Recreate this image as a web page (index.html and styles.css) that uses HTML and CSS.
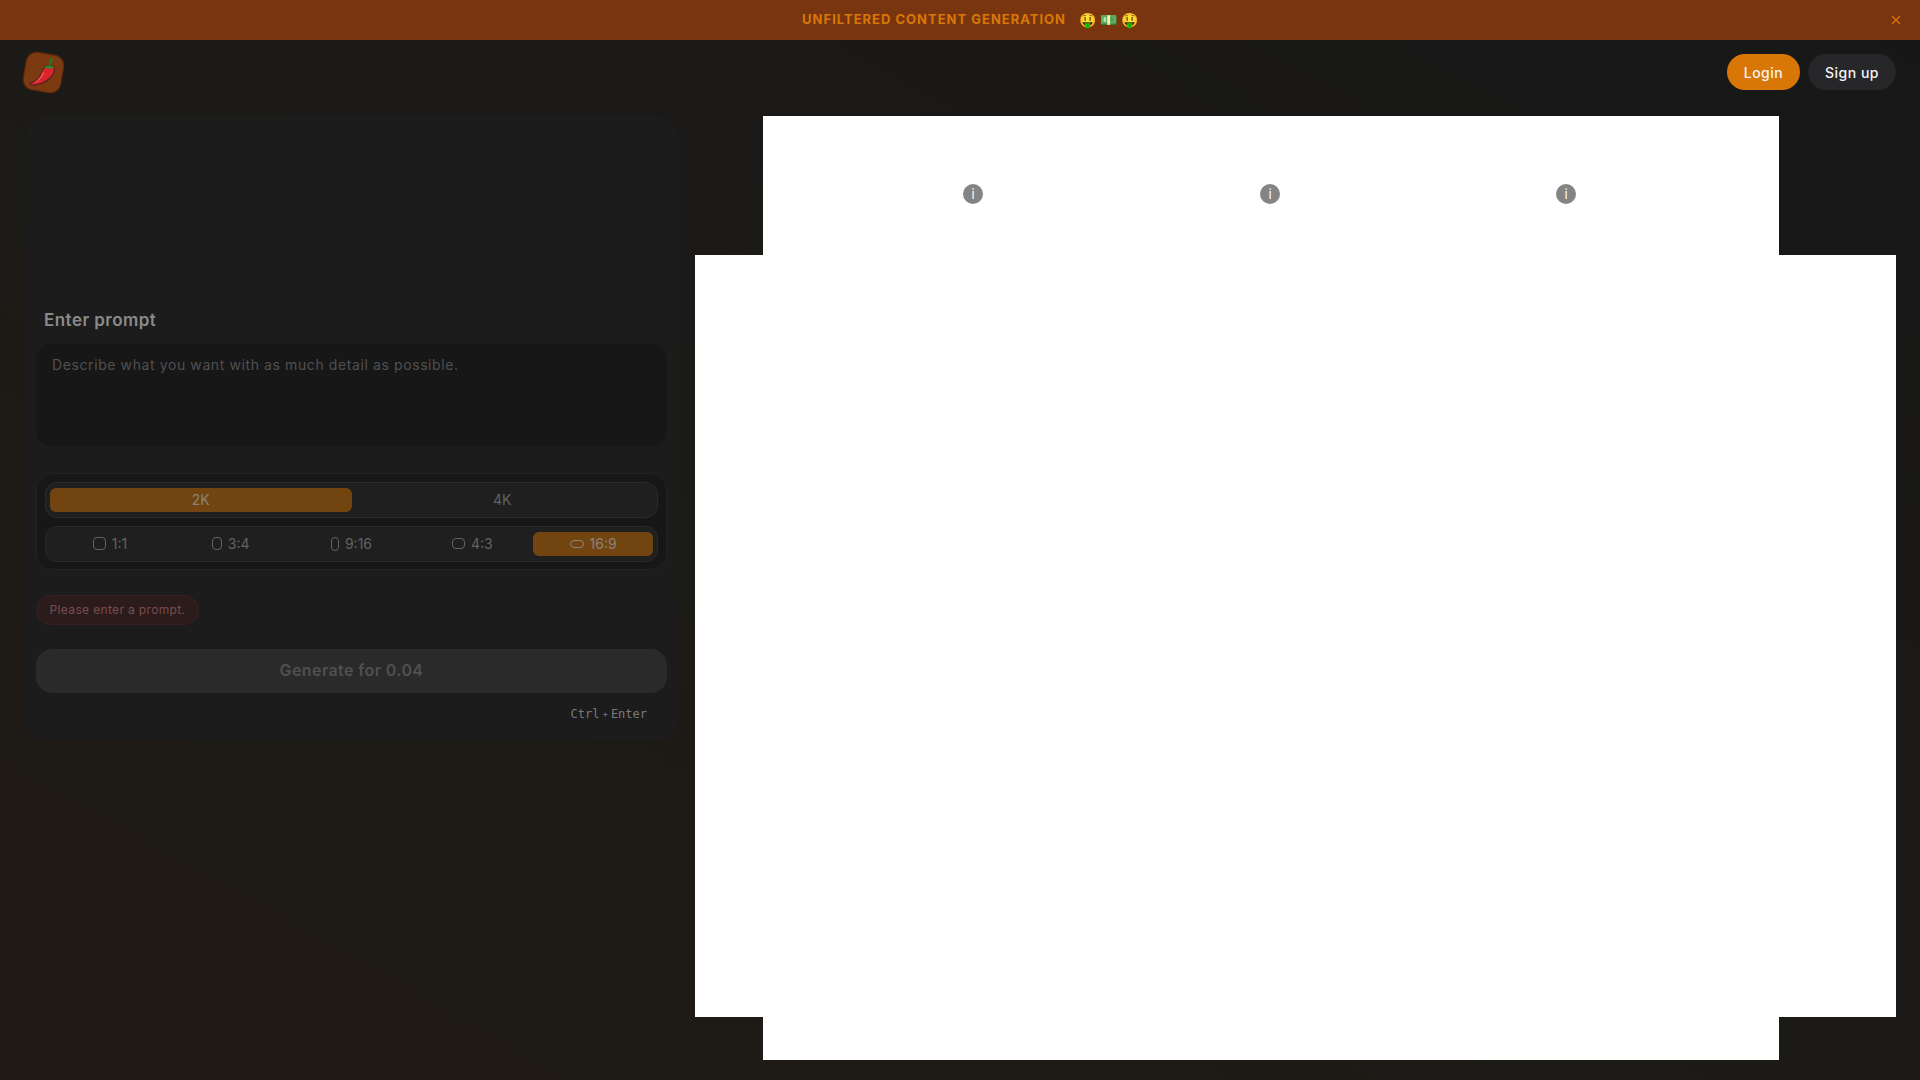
FILE: index.html
```html
<!DOCTYPE html>
<html lang="en">
<head>
<meta charset="utf-8">
<title>Generate</title>
<link rel="stylesheet" href="styles.css">
</head>
<body>
<div class="promo">
  <div class="promo-text"><span class="promo-label">UNFILTERED CONTENT GENERATION</span><span class="promo-emoji">🤑 💵 🤑</span></div>
  <svg class="promo-close" viewBox="0 0 12 12"><path d="M2 2l8 8M10 2l-8 8"/></svg>
</div>
<header class="nav">
  <div class="logo">
    <svg viewBox="0 0 30 30" class="chili">
      <path d="M21.500 9c-1-2.500 1-3 .5-6.500" fill="none" stroke="#1f7a2a" stroke-width="2" stroke-linecap="round"/>
      <path d="M15.500 10.500c2-2.500 7.500-2.500 9 0 1.500 3-.5 6.500-3.500 9.500-4 4-11 6.700-17 6.500-1.500-.2-1.500-1-.5-1.800 5-2 8.500-5.500 10-10 .5-1.800 1-3.300 2-4.200z" fill="#d9262c" stroke="#54201f" stroke-width="1"/>
      <path d="M14.500 14c-1.500 4.500-4.500 8-8.500 10.500 4-1 7.500-4 9.500-9z" fill="#f2555a"/>
      <path d="M15.500 10.500c2-2.500 7.500-2.500 9 0-1 .8-2 .8-3 .5-1.500 1-4 .5-6-.5z" fill="#2c8a34"/>
    </svg>
  </div>
  <div class="nav-actions">
    <button class="btn btn-login">Login</button>
    <button class="btn btn-signup">Sign up</button>
  </div>
</header>
<main class="main">
  <section class="panel">
    <h2 class="prompt-label">Enter prompt</h2>
    <div class="prompt-box">Describe what you want with as much detail as possible.</div>
    <div class="options">
      <div class="seg seg-two">
        <div class="seg-item active">2K</div>
        <div class="seg-item">4K</div>
      </div>
      <div class="seg seg-five">
        <div class="seg-item"><i class="ratio r11"></i>1:1</div>
        <div class="seg-item"><i class="ratio r34"></i>3:4</div>
        <div class="seg-item"><i class="ratio r916"></i>9:16</div>
        <div class="seg-item"><i class="ratio r43"></i>4:3</div>
        <div class="seg-item active"><i class="ratio r169"></i>16:9</div>
      </div>
    </div>
    <div class="error">Please enter a prompt.</div>
    <button class="generate">Generate for 0.04</button>
    <div class="shortcut"><span>Ctrl</span><small>+</small><span>Enter</span></div>
  </section>
  <section class="canvas">
    <div class="sheet sheet-wide"></div>
    <div class="sheet sheet-tall">
      <span class="info">i</span>
      <span class="info">i</span>
      <span class="info">i</span>
    </div>
  </section>
</main>
</body>
</html>
```
FILE: styles.css
```css
* { box-sizing: border-box; }
html, body { margin: 0; height: 100%; }
body {
  width: 1920px;
  height: 1080px;
  overflow: hidden;
  display: flex;
  flex-direction: column;
  background: linear-gradient(to bottom left, #171717 0%, #1c1a17 50%, #201a15 100%);
  font-family: Inter, "Liberation Sans", sans-serif;
  color: #fff;
}
.promo {
  height: 40px;
  flex: none;
  display: flex;
  align-items: center;
  justify-content: center;
  position: relative;
  background: #78350f;
}
.promo-text { display: flex; align-items: center; padding: 0 0 2px 20px; }
.promo-label {
  font-size: 13px;
  font-weight: 700;
  letter-spacing: 1px;
  color: #d97706;
}
.promo-emoji { margin-left: 13px; font-size: 14px; white-space: pre; }
.promo-close {
  position: absolute;
  right: 18px;
  top: 14px;
  width: 12px;
  height: 12px;
  fill: none;
  stroke: #d97706;
  stroke-width: 1.3;
}
.nav {
  height: 64px;
  flex: none;
  display: flex;
  align-items: center;
  justify-content: space-between;
  padding: 0 24px;
}
.logo {
  width: 39px;
  height: 39px;
  border-radius: 11px;
  background: #7c3a10;
  border: 1px solid #5a260c;
  transform: rotate(10deg);
  display: flex;
  align-items: center;
  justify-content: center;
}
.chili { width: 33px; height: 33px; flex: none; transform: rotate(-10deg); }
.nav-actions { display: flex; gap: 8px; }
.btn {
  height: 36px;
  border: 0;
  border-radius: 18px;
  padding: 0 16px;
  font: 500 14px Inter, "Liberation Sans", sans-serif;
  letter-spacing: .5px;
  color: #f4f4f5;
}
.btn-login { width: 73px; background: #d97706; }
.btn-signup { width: 88px; background: #27272a; }
.main {
  flex: 1;
  display: grid;
  grid-template-columns: 655px 1fr;
  column-gap: 16px;
  padding: 12px 24px 18px;
  align-items: start;
}
.panel {
  height: 625px;
  background: #1c1c1c;
  border-radius: 24px;
  padding: 194px 12px 0;
  display: flex;
  flex-direction: column;
}
.prompt-label {
  margin: 0 0 14px 8px;
  height: 20px;
  line-height: 20px;
  font-size: 17px;
  font-weight: 600;
  letter-spacing: .45px;
  color: #8a8a8a;
}
.prompt-box {
  height: 102px;
  border-radius: 16px;
  background: #171717;
  padding: 11px 16px;
  font-size: 14px;
  line-height: 20px;
  letter-spacing: .6px;
  color: #505052;
}
.options {
  margin-top: 27px;
  height: 97px;
  border: 1px solid #222;
  border-radius: 16px;
  background: #171717;
  padding: 8px;
  display: flex;
  flex-direction: column;
  gap: 8px;
}
.seg {
  height: 36px;
  flex: none;
  display: grid;
  border: 1px solid #2a2a2a;
  border-radius: 12px;
  background: #1f1f1f;
  padding: 5px 4px;
}
.seg-two { grid-template-columns: 1fr 1fr; }
.seg-five { grid-template-columns: repeat(5, 1fr); column-gap: 1px; }
.seg-item {
  display: flex;
  align-items: center;
  justify-content: center;
  gap: 6px;
  padding-bottom: 1px;
  border-radius: 6px;
  font-size: 14px;
  color: #626262;
}
.seg-item.active { background: #724510; color: #8a8378; }
.ratio { display: block; border: 1.3px solid currentColor; border-radius: 4px; }
.r11 { width: 13px; height: 13px; }
.r34 { width: 10px; height: 13px; }
.r916 { width: 8px; height: 14px; }
.r43 { width: 13px; height: 11px; }
.r169 { width: 14px; height: 8px; }
.error {
  margin-top: 25px;
  align-self: flex-start;
  width: 163px;
  height: 30px;
  line-height: 28px;
  text-align: center;
  border: 1px solid #38211f;
  border-radius: 15px;
  background: #2b1b1b;
  font-size: 12px;
  letter-spacing: .35px;
  color: #7a4d4d;
}
.generate {
  margin-top: 24px;
  width: 631px;
  height: 44px;
  padding-bottom: 3px;
  border: 0;
  border-radius: 16px;
  background: #2a2a2a;
  font: 600 16px Inter, "Liberation Sans", sans-serif;
  letter-spacing: .4px;
  color: #505050;
}
.shortcut {
  margin: 14px 20px 0 0;
  align-self: flex-end;
  display: flex;
  align-items: center;
  gap: 3px;
  font-family: "DejaVu Sans Mono", monospace;
  font-size: 12px;
  color: #7a7a7a;
}
.shortcut small { font-size: 9px; }
.canvas { display: grid; height: 944px; }
.sheet { grid-area: 1 / 1; background: #fff; }
.sheet-wide { margin-top: 139px; height: 762px; }
.sheet-tall {
  margin-left: 68px;
  width: 1016px;
  height: 944px;
  padding: 68px 3px 0 0;
  display: flex;
  justify-content: center;
  align-items: flex-start;
  gap: 276px;
}
.info {
  width: 20px;
  height: 20px;
  border-radius: 50%;
  background: #848484;
  color: #fff;
  font-size: 13px;
  line-height: 20px;
  text-align: center;
}
.info:first-child { margin-right: 1px; }
```
